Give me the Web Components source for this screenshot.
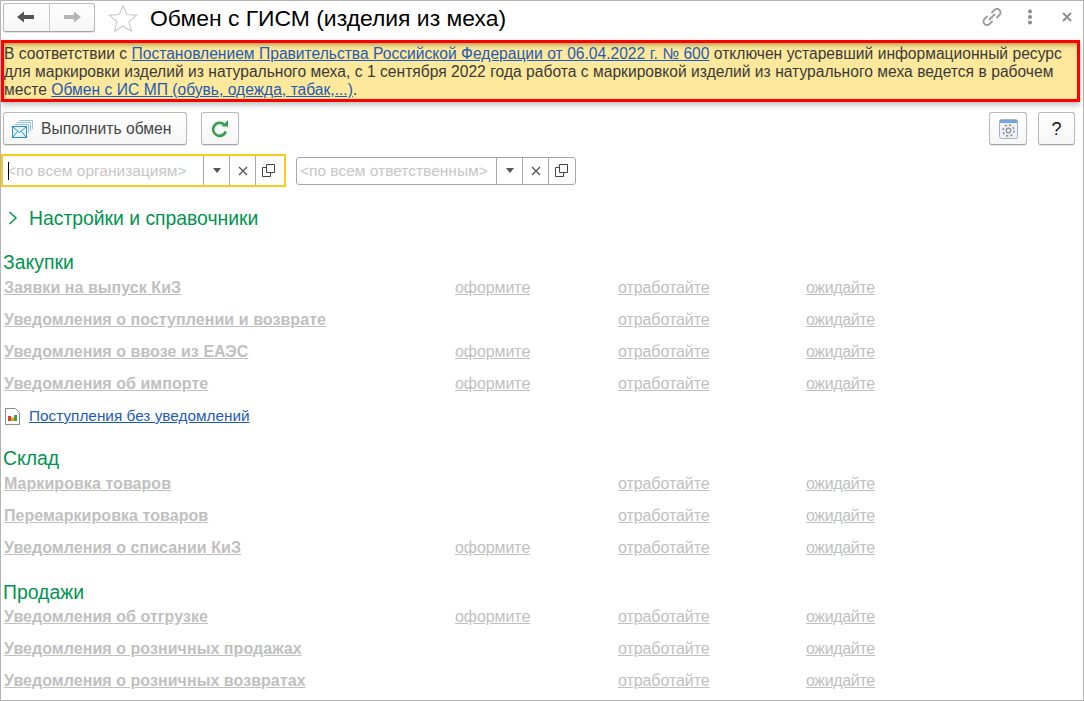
<!DOCTYPE html>
<html lang="ru"><head><meta charset="utf-8"><title>Обмен с ГИСМ</title>
<style>
html,body{margin:0;padding:0;background:#fff;height:100%;overflow:hidden}
body{font:15px/18px "Liberation Sans",Arial,sans-serif;color:#333}
x-notice a{color:#1d5bb8;text-decoration:underline}
</style></head><body>
<x-window>
  <x-header title-text="Обмен с ГИСМ (изделия из меха)"></x-header>
  <x-notice>В соответствии с <a href="#">Постановлением Правительства Российской Федерации от 06.04.2022 г. № 600</a> отключен устаревший информационный ресурс<br>для маркировки изделий из натурального меха, с 1 сентября 2022 года работа с маркировкой изделий из натурального меха ведется в рабочем<br>месте <a href="#">Обмен с ИС МП (обувь, одежда, табак,...)</a>.</x-notice>
  <x-toolbar></x-toolbar>
  <x-filters></x-filters>
  <x-settings>Настройки и справочники</x-settings>
  <x-section heading="Закупки" style="--top:21px">
    <x-row label="Заявки на выпуск КиЗ" make></x-row>
    <x-row label="Уведомления о поступлении и возврате"></x-row>
    <x-row label="Уведомления о ввозе из ЕАЭС" make></x-row>
    <x-row label="Уведомления об импорте" make></x-row>
    <x-report>Поступления без уведомлений</x-report>
  </x-section>
  <x-section heading="Склад" style="--top:17px">
    <x-row label="Маркировка товаров"></x-row>
    <x-row label="Перемаркировка товаров"></x-row>
    <x-row label="Уведомления о списании КиЗ" make></x-row>
  </x-section>
  <x-section heading="Продажи" style="--top:9px;--hh:28px">
    <x-row label="Уведомления об отгрузке" make></x-row>
    <x-row label="Уведомления о розничных продажах"></x-row>
    <x-row label="Уведомления о розничных возвратах"></x-row>
  </x-section>
</x-window>
<script>
function def(name, css, html){
  customElements.define(name, class extends HTMLElement{
    connectedCallback(){
      if(this.shadowRoot) return;
      const r=this.attachShadow({mode:'open'});
      r.innerHTML='<style>'+css+'</style>'+(typeof html==='function'?html(this):html);
    }
  });
}
const btn=`box-sizing:border-box;background:linear-gradient(#fff,#f6f6f6);border:1px solid #b9b9b9;border-bottom-color:#a5a5a5;border-radius:3px;box-shadow:0 1px 1px rgba(0,0,0,.12);display:flex;align-items:center;justify-content:center;`;

def('x-window',`:host{display:block;box-sizing:border-box;width:1084px;height:701px;border:1px solid #b4b4b4;overflow:hidden;background:#fff}`,`<slot></slot>`);

def('x-header',`
:host{display:flex;align-items:center;height:38px;padding:0 0 0 2px;box-sizing:border-box}
.nav{${btn}width:92px;height:29px;margin-top:-6px}
.nav span{flex:1;height:100%;display:flex;align-items:center;justify-content:center}
.nav span+span{border-left:1px solid #c9c9c9}
.star{margin:-4px 0 0 13px;width:30px;height:30px;display:block}
h1{font:400 22.900px/30px "Liberation Sans",Arial,sans-serif;color:#000;margin:-4px 0 0 12px;flex:1;white-space:nowrap}
.tools{display:flex;align-items:center;margin-top:-7px}
`,h=>`
<div class="nav"><span><svg width="20" height="14" viewBox="0 0 20 14"><path d="M1 7 8 1.500V5h10v4H8v3.500z" fill="#555"/></svg></span><span><svg width="20" height="14" viewBox="0 0 20 14"><path d="M19 7 12 1.500V5H2v4h10v3.500z" fill="#b5b5b5"/></svg></span></div>
<svg class="star" viewBox="0 0 30 30"><path d="M15 2.500 18.700 11.600 28.500 12.300 21 18.600 23.400 28.200 15 23 6.600 28.200 9 18.600 1.500 12.300 11.300 11.600z" fill="#fff" stroke="#c8c8c8" stroke-width="1.100"/></svg>
<h1>${h.getAttribute('title-text')}</h1>
<div class="tools">
<svg width="20" height="20" viewBox="0 0 20 20" fill="none" stroke="#9a9a9a" stroke-width="1.800" stroke-linecap="round" style="margin-right:25px"><path d="M7.500 12.500 12.500 7.500"/><path d="M10 5.500 12.500 3a3.500 3.500 0 0 1 5 5L15 10.500"/><path d="M10 14.500 7.500 17a3.500 3.500 0 0 1-5-5L5 9.500"/></svg>
<svg width="6" height="16" viewBox="0 0 6 16" fill="#8c8c8c" style="margin-right:29px"><circle cx="3" cy="2.500" r="2"/><circle cx="3" cy="8" r="2"/><circle cx="3" cy="13.500" r="2"/></svg>
<svg width="10" height="10" viewBox="0 0 10 10" stroke="#8c8c8c" stroke-width="1.800" style="margin-right:11px"><path d="M1 1 9 9M9 1 1 9"/></svg>
</div>`);

def('x-notice',`
:host{display:block;box-sizing:border-box;height:62px;margin:1px 3px 0 0;border:3px solid #f00;background:#fde89b;padding:0;line-height:18px;font-size:15.600px;color:#3a3a3a;white-space:nowrap;box-shadow:0 3px 6px rgba(0,0,0,.25),inset 2px 4px 4px -2px rgba(90,70,0,.45);position:relative}
.t{display:block;padding-top:2px;word-spacing:.12px}`,`<span class="t"><slot></slot></span>`);

def('x-toolbar',`
:host{display:flex;align-items:center;height:33px;margin-top:10px;padding:0 8px 0 2px}
.b{${btn}height:33px;color:#444;font-size:15.700px}
.run{width:184px;gap:8px;padding-left:8px;justify-content:flex-start}
.ref{width:38px;margin-left:14px}
.sp{flex:1}
.s{width:38px;margin-right:11px}
.q{width:37px;font-size:18px;color:#111}`,`
<div class="b run"><svg width="21" height="18" viewBox="0 0 21 18"><g fill="none" stroke="#8ec4e8"><path d="M7 .5H20.500V9"/><path d="M5 2.500H18.500V11"/><path d="M3 4.500H16.500V13" /></g><rect x=".5" y="6.500" width="14" height="11" fill="#e9f5fd" stroke="#2b8fd0"/><path d="M1 7 7.500 12.500 14 7M1 17 5.500 11.500M14 17 9.500 11.500" fill="none" stroke="#2b8fd0"/></svg><span>Выполнить обмен</span></div>
<div class="b ref"><svg width="18" height="18" viewBox="0 0 18 18" fill="none"><path d="M14.800 11.500A6.500 6.500 0 1 1 13 4.500" stroke="#33a04a" stroke-width="2.700"/><path d="M10.500 6.500H17V0z" fill="#33a04a"/></svg></div>
<div class="sp"></div>
<div class="b s"><svg width="19" height="20" viewBox="0 0 19 20"><rect x=".5" y=".5" width="18" height="19" rx="2" fill="#eef1f5" stroke="#a6b2c0"/><path d="M1 1h17v3H1z" fill="#6ea7e0"/><circle cx="9.500" cy="11.500" r="2.300" fill="none" stroke="#8a8a8a" stroke-width="1.200"/><circle cx="9.500" cy="11.500" r="5.500" fill="none" stroke="#8a8a8a" stroke-width="1.500" stroke-dasharray="2.200 2.100"/></svg></div>
<div class="b q"><b style="font-weight:400">?</b></div>`);

def('x-filter',`
:host{display:flex;box-sizing:border-box;height:var(--h);width:var(--w);border:var(--bw) solid var(--bc);border-radius:var(--r);padding-right:var(--pr,0);background:#fff;align-items:stretch;position:relative}
.t{flex:1;display:flex;align-items:center;color:#c6c6c6;font-size:15.500px;white-space:nowrap;padding-left:var(--pad);overflow:hidden}
.c{box-sizing:border-box;width:26px;display:flex;align-items:center;justify-content:center;border-left:1px solid #a8a8a8}
.caret{position:absolute;left:5px;top:6px;width:1px;height:18px;background:#000;display:var(--caret,none)}`,
h=>`<span class="caret"></span><span class="t">${h.getAttribute('ph')}</span>
<span class="c"><svg width="8" height="5" viewBox="0 0 8 5"><path d="M0 0h8L4 5z" fill="#555"/></svg></span>
<span class="c"><svg width="10" height="10" viewBox="0 0 10 10" stroke="#555" stroke-width="1.300"><path d="M1 1 9 9M9 1 1 9"/></svg></span>
<span class="c"><svg width="13" height="13" viewBox="0 0 13 13" fill="none" stroke="#444"><path d="M4.500 .5h8v8h-8z"/><path d="M4.500 3.500h-4v9h8v-4"/></svg></span>`);

def('x-filters',`
:host{display:flex;align-items:center;margin-top:9px;padding-left:0;gap:10px}`,`
<x-filter ph="&lt;по всем организациям&gt;" style="--w:285px;--h:33px;--bw:2px;--bc:#fbc91f;--r:0;--pad:4px;--caret:block;--pr:3px"></x-filter>
<x-filter ph="&lt;по всем ответственным&gt;" style="--w:280px;--h:28px;--bw:1px;--bc:#a8a8a8;--r:3px;--pad:3px;--pr:1px"></x-filter>`);

def('x-settings',`
:host{display:flex;align-items:center;height:24px;margin-top:19px;padding-left:7px;gap:9px;color:#00944f;font-size:19.350px}`,
`<svg width="12" height="14" viewBox="0 0 12 14" fill="none" stroke="#00944f" stroke-width="1.500"><path d="M1.500 1 8 7 1.500 13"/></svg><span><slot></slot></span>`);

def('x-section',`
:host{display:block;padding-top:var(--top,20px);padding-left:2px}
h2{font:400 19.400px/22px "Liberation Sans",Arial,sans-serif;color:#00944f;margin:0;height:var(--hh,29px)}`,
h=>`<h2>${h.getAttribute('heading')}</h2><slot></slot>`);

def('x-row',`
:host{display:grid;grid-template-columns:451px 163px 188px 1fr;height:32px;line-height:16px;font-size:16px;color:#c0c0c0;margin-left:1px;align-items:start}
a{color:#c0c0c0;text-decoration:underline;justify-self:start;letter-spacing:-.08px}
a.l{font-weight:700;letter-spacing:.055px}
a.w{letter-spacing:-.35px}`,
h=>`<a class="l">${h.getAttribute('label')}</a><a>${h.hasAttribute('make')?'оформите':''}</a><a>отработайте</a><a class="w">ожидайте</a>`);

def('x-report',`
:host{display:flex;align-items:flex-start;height:22px;gap:9px;padding-left:2px;font-size:15.350px;line-height:16px;color:#1d5bb8}
a{text-decoration:underline;color:inherit}`,
`<svg width="15" height="17" viewBox="0 0 15 17"><path d="M.5.5h10l4 4v12H.5z" fill="#fff" stroke="#8c8c8c"/><path d="M3 13V8h3v5z" fill="#d8402a"/><path d="M6 13V9.500h3V13z" fill="#e8a020"/><path d="M9 13V7h3v6z" fill="#3fa34a"/></svg><a><slot></slot></a>`);
</script>
</body></html>
